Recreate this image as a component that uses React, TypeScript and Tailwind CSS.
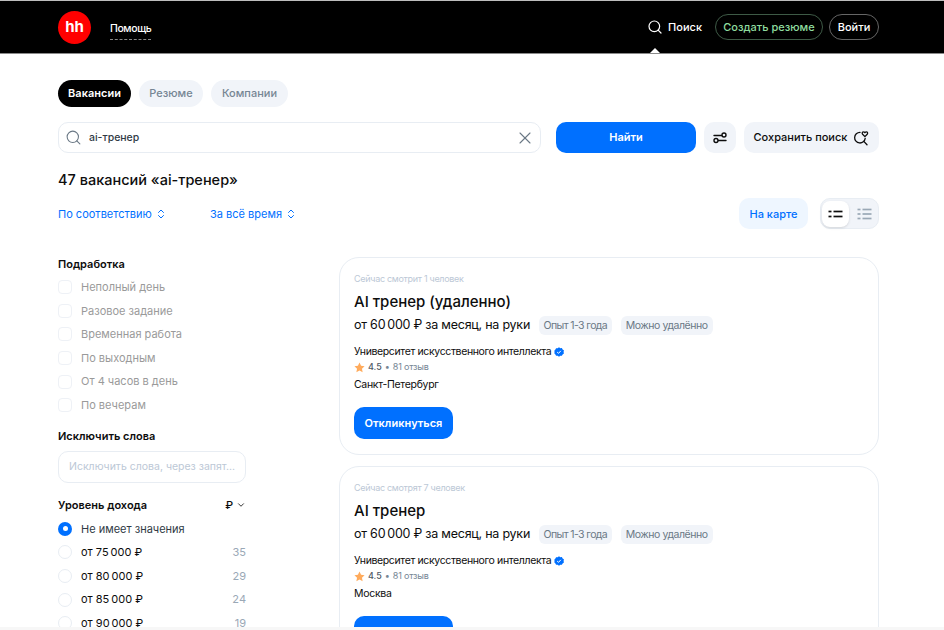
import { ChevronDown, ChevronsUpDown, Search, X } from 'lucide-react';

const font = { fontFamily: 'Inter, "Noto Sans", sans-serif' };

const partTime = ['Неполный день', 'Разовое задание', 'Временная работа', 'По выходным', 'От 4 часов в день', 'По вечерам'];

const incomes = [
  { label: 'от 75\u2009000 ₽', count: 35 },
  { label: 'от 80\u2009000 ₽', count: 29 },
  { label: 'от 85\u2009000 ₽', count: 24 },
  { label: 'от 90\u2009000 ₽', count: 19 },
];

const vacancies = [
  { watching: 'Сейчас смотрит 1 человек', title: 'AI тренер (удаленно)', city: 'Санкт-Петербург' },
  { watching: 'Сейчас смотрят 7 человек', title: 'AI тренер', city: 'Москва' },
];

function SaveSearchIcon() {
  return (
    <svg width="16" height="16" viewBox="0 0 16 16" fill="none" stroke="#0d0d0d" strokeWidth="1.3" strokeLinecap="round">
      <path d="M7 2.4A5.3 5.3 0 1 0 12.2 8.4" />
      <path d="M10.8 11.4L14 14.8" />
      <path d="M11.9 6.6L9.6 4.2C8.7 3.2 9.4 1.7 10.6 1.8c.6 0 1 .3 1.3.7.3-.4.7-.7 1.3-.7 1.2-.1 1.9 1.4 1 2.4z" />
    </svg>
  );
}

function FiltersIcon() {
  return (
    <svg width="16" height="16" viewBox="0 0 16 16" fill="none" stroke="#0d0d0d" strokeWidth="1.4" strokeLinecap="round">
      <path d="M2 5.5h7.5" />
      <circle cx="12" cy="5" r="2" />
      <circle cx="4" cy="10.5" r="2" />
      <path d="M6.5 10.5H14" />
    </svg>
  );
}

function ListIcon({ color, dense }: { color: string; dense?: boolean }) {
  const rows = dense ? [2.5, 7, 11.5] : [4.5, 9.5];
  return (
    <svg width="15" height="14" viewBox="0 0 15 14" fill="none" stroke={color} strokeWidth="1.7">
      {rows.map((y) => (
        <g key={y}>
          <path d={`M0.5 ${y}h3`} />
          <path d={`M5.5 ${y}h9`} />
        </g>
      ))}
    </svg>
  );
}

function VerifiedIcon() {
  return (
    <svg width="10" height="10" viewBox="0 0 12 12">
      <path d="M6 .4l1.6 1 1.9-.1.8 1.7 1.6 1-.4 1.9.4 2-1.6 1-.8 1.6-1.9 0L6 11.6l-1.6-1.1-1.9.1-.8-1.7-1.2-1 .1-1.9-.1-1.9 1.2-1 .8-1.7 1.9.1z" fill="#0070ff" />
      <path d="M3.8 6.1l1.6 1.5 2.8-3" fill="none" stroke="#fff" strokeWidth="1.2" />
    </svg>
  );
}

function StarIcon() {
  return (
    <svg width="11" height="11" viewBox="0 0 12 12">
      <path d="M6 .6l1.7 3.5 3.8.5-2.8 2.7.7 3.9L6 9.4l-3.4 1.8.7-3.9L.5 4.6l3.8-.5z" fill="#ffab5c" />
    </svg>
  );
}

function VacancyCard({ watching, title, city }: { watching: string; title: string; city: string }) {
  return (
    <div className="h-[198px] shrink-0 rounded-[20px] border border-[#e8edf3] bg-white pt-[14px] pl-[14px]">
      <div className="text-[9px] leading-[14px] tracking-[-0.3px] text-[#bcc8d6]">{watching}</div>
      <div className="mt-[5px] text-[15px] leading-[22px] font-medium text-[#0d0d0d]">{title}</div>
      <div className="mt-[2px] flex items-center">
        <span className="text-[12.5px] leading-5 tracking-[-0.24px] text-[#0d0d0d]">от 60{'\u2009'}000 ₽ за месяц, на руки</span>
        <span className="ml-[9px] rounded-md bg-[#f1f4f9] px-[4.5px] text-[10.5px] leading-[19px] tracking-[-0.6px] text-[#6a7885]">Опыт 1-3 года</span>
        <span className="ml-[9px] rounded-md bg-[#f1f4f9] px-[5px] text-[10.5px] leading-[19px] tracking-[-0.45px] text-[#6a7885]">Можно удалённо</span>
      </div>
      <div className="mt-[9px] flex items-center gap-[3px] text-[10.5px] leading-[15px] tracking-[-0.37px] text-[#0d0d0d]">
        Университет искусственного интеллекта <VerifiedIcon />
      </div>
      <div className="mt-[1px] flex items-center text-[9px] leading-[14px] text-[#768694]">
        <StarIcon />
        <span className="ml-[3px] font-medium text-[#4f5a66]">4.5</span>
        <span className="mx-[3px]">•</span>
        <span className="tracking-[-0.2px]">81 отзыв</span>
      </div>
      <div className="mt-[2px] text-[10.5px] leading-[18px] tracking-[-0.3px] text-[#0d0d0d]">{city}</div>
      <button className="mt-[13px] h-8 w-[99px] rounded-[10px] bg-[#0070ff] text-[11px] font-semibold text-white">Откликнуться</button>
    </div>
  );
}

export default function App() {
  return (
    <div className="relative h-[630px] w-[944px] overflow-hidden bg-white" style={font}>
      <header className="flex h-[53px] items-center border-t border-[#bdbdbd] bg-black pr-[65px] pl-[58px] shadow-[0_1px_0_#8a8a8a]">
        <div className="flex h-[33px] w-[33px] items-center justify-center rounded-full bg-[#ff0000] text-[15px] font-bold text-white">hh</div>
        <span className="mt-[6px] ml-[19px] border-b border-dashed border-[#888] pb-[2px] text-[10.5px] leading-[16px] font-medium tracking-[-0.4px] text-white">Помощь</span>
        <div className="relative ml-auto flex items-center gap-[5px] self-stretch text-[11px] font-medium text-white">
          <Search size={16} strokeWidth={1.8} />
          Поиск
          <div className="absolute bottom-0 left-[3px] h-0 w-0 border-x-[5px] border-b-[5px] border-x-transparent border-b-white" />
        </div>
        <button className="ml-[13px] h-[26px] w-[108px] rounded-full border border-[#3e5a46] text-[11px] font-medium text-[#8fdc9f]">Создать резюме</button>
        <button className="ml-[6px] h-[26px] w-[50px] rounded-full border border-[#666] text-[11px] font-medium text-white">Войти</button>
      </header>

      <main className="pr-[65px] pl-[58px]">
        <div className="flex gap-2 pt-[27px]">
          <span className="flex h-[27px] w-[73px] items-center justify-center rounded-full bg-black text-[11px] font-semibold text-white">Вакансии</span>
          <span className="flex h-[27px] w-[64px] items-center justify-center rounded-full bg-[#f1f4f9] text-[11px] font-medium text-[#768694]">Резюме</span>
          <span className="flex h-[27px] w-[77px] items-center justify-center rounded-full bg-[#f1f4f9] text-[11px] font-medium text-[#768694]">Компании</span>
        </div>

        <div className="mt-[15px] flex h-[31px] items-stretch">
          <div className="flex w-[483px] items-center rounded-[10px] border border-[#e8edf3] pr-[5px] pl-[6px]">
            <Search size={17} strokeWidth={1.5} className="text-[#6a7885]" />
            <span className="ml-[7px] text-[10.5px] font-medium text-[#303a45]">ai-тренер</span>
            <X size={20} strokeWidth={1.3} className="ml-auto text-[#6a7885]" />
          </div>
          <button className="ml-[15px] w-[140px] rounded-[10px] bg-[#0070ff] text-[11px] font-semibold text-white">Найти</button>
          <button className="ml-2 flex w-[32px] items-center justify-center rounded-[10px] bg-[#f1f4f9]"><FiltersIcon /></button>
          <button className="ml-2 flex w-[135px] items-center justify-center gap-[6px] rounded-[10px] bg-[#f1f4f9] text-[11px] font-medium text-[#0d0d0d]">
            Сохранить поиск <SaveSearchIcon />
          </button>
        </div>

        <h1 className="mt-[17px] text-[14.5px] leading-[20px] font-medium text-[#0d0d0d]">47 вакансий «ai-тренер»</h1>

        <div className="mt-[8px] flex h-[31px] items-center text-[11px] text-[#0070ff]">
          <span className="flex w-[152px] items-center gap-[3px] pt-[1px]">По соответствию <ChevronsUpDown size={12} /></span>
          <span className="flex items-center gap-[3px] pt-[1px]">За всё время <ChevronsUpDown size={12} /></span>
          <span className="ml-auto flex h-[31px] w-[69px] items-center justify-center rounded-[10px] bg-[#eef6ff] pt-[1px] font-medium">На карте</span>
          <div className="ml-[12px] flex h-[31px] w-[59px] items-center rounded-[10px] border border-[#e8edf3] bg-[#f1f4f9] pl-[1px]">
            <span className="flex h-[26px] w-[27px] items-center justify-center rounded-lg bg-white shadow-sm"><ListIcon color="#0d0d0d" /></span>
            <span className="ml-[2px] flex h-[26px] w-[27px] items-center justify-center"><ListIcon color="#9aa8b6" dense /></span>
          </div>
        </div>

        <div className="mt-[28px] flex">
          <aside className="w-[188px] shrink-0">
            <div className="text-[11px] leading-[14px] font-semibold text-[#0d0d0d]">Подработка</div>
            <div className="mt-[4.5px]">
              {partTime.map((item) => (
                <div key={item} className="flex h-[23.6px] items-center gap-[9px] text-[11px] text-[#9a9a9a]">
                  <span className="h-[14px] w-[14px] rounded-[4px] border border-[#eef1f6]" />
                  {item}
                </div>
              ))}
            </div>
            <div className="mt-[11.5px] text-[11px] leading-[14px] font-semibold text-[#0d0d0d]">Исключить слова</div>
            <div className="mt-[8px] flex h-8 items-center rounded-[10px] border border-[#e8edf3] pl-[10px] text-[10.5px] whitespace-nowrap text-[#bcc8d6]">Исключить слова, через запят...</div>
            <div className="mt-[15px] flex items-center justify-between text-[11px] leading-[14px] font-semibold text-[#0d0d0d]">
              Уровень дохода
              <span className="flex items-center gap-[3px] font-medium">₽ <ChevronDown size={10} /></span>
            </div>
            <div className="mt-[5.5px] flex h-[23.6px] items-center gap-[9px] text-[11px] text-[#303a45]">
              <span className="flex h-[14px] w-[14px] items-center justify-center rounded-full bg-[#0070ff]"><span className="h-[5px] w-[5px] rounded-full bg-white" /></span>
              Не имеет значения
            </div>
            {incomes.map((row) => (
              <div key={row.label} className="flex h-[23.6px] items-center gap-[9px] text-[11px] text-[#0d0d0d]">
                <span className="h-[14px] w-[14px] rounded-full border border-[#e8edf3]" />
                {row.label}
                <span className="ml-auto text-[#9aa8b6]">{row.count}</span>
              </div>
            ))}
          </aside>

          <section className="ml-[93px] flex flex-1 flex-col gap-[11px]">
            {vacancies.map((v) => (
              <VacancyCard key={v.title} {...v} />
            ))}
          </section>
        </div>
      </main>
      <div className="absolute inset-x-0 bottom-0 h-[3px] bg-[#f7f7f7]" />
    </div>
  );
}
